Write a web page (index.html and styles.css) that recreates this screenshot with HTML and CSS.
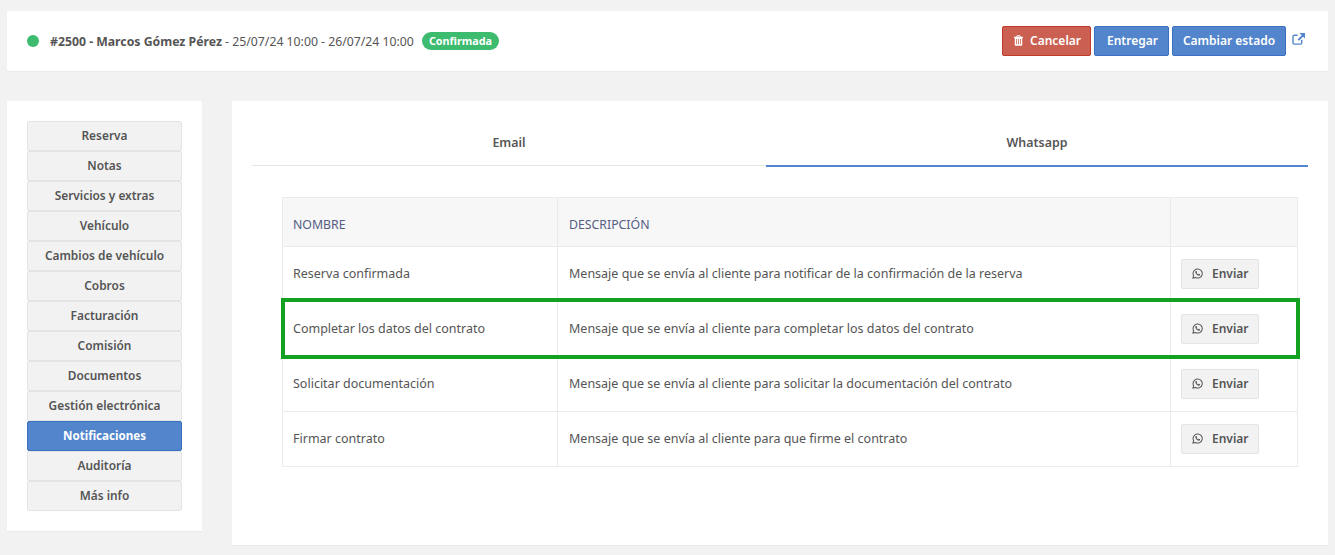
FILE: index.html
```html
<!DOCTYPE html>
<html lang="es">
<head>
<meta charset="utf-8">
<title>Reserva #2500</title>
<link rel="stylesheet" href="styles.css">
</head>
<body>
<header class="topbar">
  <div class="summary">
    <span class="dot"></span>
    <span><b>#2500 - Marcos Gómez Pérez</b> - 25/07/24 10:00 - 26/07/24 10:00</span>
    <span class="badge">Confirmada</span>
  </div>
  <div class="actions">
    <button class="btn danger"><svg class="trash" viewBox="0 0 12 14" width="9" height="11"><path fill="#fff" fill-rule="evenodd" d="M4 0h4l1 2h3v1.500h-1V13a1 1 0 0 1-1 1H2a1 1 0 0 1-1-1V3.500H0V2h3zM4.700 1.200 4.300 2h3.400l-.4-.8zM3 5v7h1V5zm2.500 0v7h1V5zM8 5v7h1V5z"/></svg>Cancelar</button>
    <button class="btn primary entregar">Entregar</button>
    <button class="btn primary cambiar">Cambiar estado</button>
    <svg class="ext" viewBox="0 0 14 13" width="13" height="12"><path fill="none" stroke="#5285cc" stroke-width="1.500" d="M10.500 7.500V10.500a1.500 1.500 0 0 1-1.500 1.500H2.500A1.500 1.500 0 0 1 1 10.500V4a1.500 1.500 0 0 1 1.500-1.500H6"/><path fill="#5285cc" d="M8 0h6v6l-2-2-4.500 4.500-1.500-1.500L10.500 2.500z"/></svg>
  </div>
</header>
<div class="layout">
  <nav class="side">
    <a class="nav">Reserva</a>
    <a class="nav">Notas</a>
    <a class="nav">Servicios y extras</a>
    <a class="nav">Vehículo</a>
    <a class="nav">Cambios de vehículo</a>
    <a class="nav">Cobros</a>
    <a class="nav">Facturación</a>
    <a class="nav">Comisión</a>
    <a class="nav">Documentos</a>
    <a class="nav">Gestión electrónica</a>
    <a class="nav active">Notificaciones</a>
    <a class="nav">Auditoría</a>
    <a class="nav">Más info</a>
  </nav>
  <main class="content">
    <div class="tabs">
      <div class="tab">Email</div>
      <div class="tab current">Whatsapp</div>
    </div>
    <div class="table-wrap">
      <table>
        <thead>
          <tr><th class="c1">NOMBRE</th><th class="c2">DESCRIPCIÓN</th><th class="c3"></th></tr>
        </thead>
        <tbody>
          <tr><td>Reserva confirmada</td><td>Mensaje que se envía al cliente para notificar de la confirmación de la reserva</td><td><button class="send"><svg class="wa" viewBox="0 0 24 24" width="11" height="11"><use href="#wa"/></svg>Enviar</button></td></tr>
          <tr><td>Completar los datos del contrato</td><td>Mensaje que se envía al cliente para completar los datos del contrato</td><td><button class="send"><svg class="wa" viewBox="0 0 24 24" width="11" height="11"><use href="#wa"/></svg>Enviar</button></td></tr>
          <tr><td>Solicitar documentación</td><td>Mensaje que se envía al cliente para solicitar la documentación del contrato</td><td><button class="send"><svg class="wa" viewBox="0 0 24 24" width="11" height="11"><use href="#wa"/></svg>Enviar</button></td></tr>
          <tr><td>Firmar contrato</td><td>Mensaje que se envía al cliente para que firme el contrato</td><td><button class="send"><svg class="wa" viewBox="0 0 24 24" width="11" height="11"><use href="#wa"/></svg>Enviar</button></td></tr>
        </tbody>
      </table>
      <div class="highlight"></div>
    </div>
  </main>
</div>
<svg class="defs" width="0" height="0"><defs><g id="wa"><path fill="none" stroke="#555" stroke-width="2.200" d="M2 22l1.500-5.400A10 10 0 1 1 7.500 20.700z"/><path fill="#555" d="M8.500 6.800c.5-.5 1.200-.5 1.500 0l1 2.200c.1.400 0 .7-.3 1l-.7.800c.8 1.500 1.900 2.500 3.400 3.200l.9-1c.3-.3.600-.3 1-.2l2 1c.4.300.4.800.2 1.400-.5 1.100-1.700 1.800-3 1.500-3.600-.8-6.600-3.700-7.200-7-.2-1.100.1-2.100.7-2.700z"/></g></defs></svg>
</body>
</html>
```
FILE: styles.css
```css
* { box-sizing: border-box; }
html, body { margin: 0; padding: 0; }
body {
  background: #f2f2f2;
  color: #555;
  font-family: "Noto Sans", "Open Sans", sans-serif;
  font-size: 12.500px;
  height: 555px;
  overflow: hidden;
  padding: 11px 7px 0;
}
button { font-family: inherit; cursor: pointer; }
.topbar {
  height: 60px;
  background: #fff;
  box-shadow: 0 1px 1px rgba(0,0,0,.03);
  display: flex;
  align-items: center;
  justify-content: space-between;
  padding: 0 20px;
}
.summary { display: flex; align-items: center; color: #555; font-size: 12.250px; }
.summary b { font-weight: 700; }
.dot { width: 12px; height: 12px; border-radius: 50%; background: #3dbb6f; margin-right: 11px; }
.badge {
  background: #3dbb6f;
  color: #fff;
  font-weight: 700;
  font-size: 10.800px;
  line-height: 18px;
  height: 18px;
  padding: 0 7px;
  border-radius: 9px;
  margin-left: 8px;
}
.actions { display: flex; align-items: center; gap: 3px; }
.btn {
  height: 30px;
  border-radius: 2px;
  color: #fff;
  font-size: 12px;
  font-weight: 600;
  padding: 0 10px 2px;
  border: 1px solid;
  display: flex;
  align-items: center;
  flex: none;
  white-space: nowrap;
}
.danger { background: #cb5f51; border-color: #c0392b; width: 89px; padding-left: 11px; }
.primary { background: #5285cc; border-color: #3a70c0; }
.entregar { width: 75px; justify-content: center; padding: 0 0 2px 2px; }
.cambiar { width: 114px; justify-content: center; padding: 0 0 2px; }
.trash { margin: 0 7px 0 0; flex: none; }
.ext { margin: -4px 3px 0 3px; flex: none; }
.layout { display: flex; gap: 30px; margin-top: 30px; align-items: flex-start; }
.side {
  flex: none;
  width: 195px;
  background: #fff;
  padding: 20px;
  box-shadow: 0 1px 1px rgba(0,0,0,.03);
  display: flex;
  flex-direction: column;
}
.nav {
  height: 30px;
  background: #f2f2f2;
  border: 1px solid #e4e4e4;
  border-radius: 2px;
  display: flex;
  align-items: center;
  justify-content: center;
  font-size: 11.900px;
  font-weight: 600;
  color: #555;
  padding-bottom: 2px;
}
.nav.active { background: #5285cc; border-color: #3a70c0; color: #fff; font-weight: 700; font-size: 11.600px; }
.content {
  flex: 1;
  min-width: 0;
  height: 444px;
  background: #fff;
  padding: 20px;
  box-shadow: 0 1px 1px rgba(0,0,0,.03);
}
.tabs { display: grid; grid-template-columns: 514px 1fr; }
.tab {
  height: 45px;
  border-bottom: 1px solid #e6e6e6;
  display: flex;
  align-items: center;
  justify-content: center;
  font-size: 12.400px;
  font-weight: 600;
  padding-bottom: 2px;
}
.tab.current { border-bottom: 2px solid #5285cc; height: 46px; padding-bottom: 2px; }
.table-wrap { position: relative; margin: 30px 10px 0 30px; }
table { border-collapse: collapse; width: 1015px; table-layout: fixed; }
th, td { border: 1px solid #ebebeb; padding: 0 10px; text-align: left; font-weight: 400; }
th:nth-child(2), td:nth-child(2) { padding-left: 11px; }
th { height: 49px; background: #f7f7f7; color: #565d84; padding-top: 5px; font-size: 12.300px; }
td { height: 55px; color: #555; padding-bottom: 2px; }
.c1 { width: 275px; }
.c2 { width: 613px; }
.c3 { width: 127px; }
.send {
  width: 78px;
  height: 30px;
  background: #f2f2f2;
  border: 1px solid #e4e4e4;
  border-radius: 2px;
  color: #555;
  font-size: 12px;
  font-weight: 600;
  display: flex;
  align-items: center;
  padding: 0 0 2px 10px;
  margin-top: 2px;
}
.wa { margin-right: 9px; flex: none; }
.highlight {
  position: absolute;
  left: -1px;
  top: 101px;
  width: 1019px;
  height: 61px;
  border: 4px solid #14a020;
  pointer-events: none;
}
.defs { position: absolute; }
```
